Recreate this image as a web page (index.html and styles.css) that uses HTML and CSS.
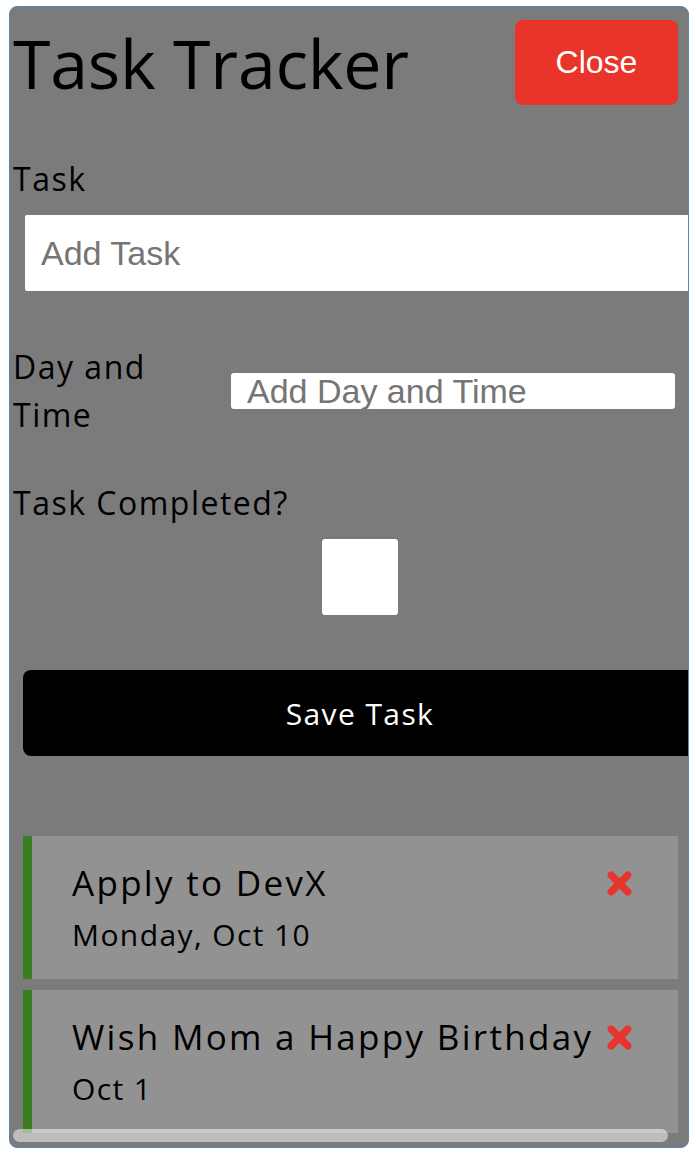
FILE: index.html
```html
<!DOCTYPE html>
<html lang="en">
<head>
<meta charset="utf-8">
<title>Task Tracker</title>
<link rel="stylesheet" href="styles.css">
</head>
<body>
<div class="app">
  <header class="header">
    <h1 class="title">Task Tracker</h1>
    <button class="btn-close" type="button">Close</button>
  </header>
  <form class="add-form">
    <div class="form-control">
      <label class="label">Task</label>
      <input class="input-task" type="text" placeholder="Add Task">
    </div>
    <div class="form-control form-row">
      <label class="label label-day">Day and Time</label>
      <input class="input-day" type="text" placeholder="Add Day and Time">
    </div>
    <div class="form-control form-check">
      <label class="label">Task Completed?</label>
      <input class="checkbox" type="checkbox">
    </div>
    <button class="btn-save" type="button">Save Task</button>
  </form>
  <div class="tasks">
    <div class="task">
      <h3 class="task-title">Apply to DevX
        <svg class="icon-x" viewBox="0 0 26 26" aria-hidden="true"><path d="M5 5 L21 21 M21 5 L5 21"/></svg>
      </h3>
      <p class="task-day">Monday, Oct 10</p>
    </div>
    <div class="task">
      <h3 class="task-title">Wish Mom a Happy Birthday
        <svg class="icon-x" viewBox="0 0 26 26" aria-hidden="true"><path d="M5 5 L21 21 M21 5 L5 21"/></svg>
      </h3>
      <p class="task-day">Oct 1</p>
    </div>
  </div>
  <div class="scroll-thumb"></div>
</div>
</body>
</html>
```
FILE: styles.css
```css
* { box-sizing: border-box; }

body {
  margin: 0;
  background: #ffffff;
  font-family: "Open Sans", "DejaVu Sans", sans-serif;
}

.app {
  position: relative;
  margin: 6px 0 0 9px;
  width: 680px;
  height: 1142px;
  border: 1px solid #5a86ba;
  border-radius: 8px;
  background: #7b7b7b;
  overflow: hidden;
  padding: 13px 10px 12px 3px;
}

.header {
  display: flex;
  justify-content: space-between;
  align-items: center;
  height: 85px;
}

.title {
  margin: 0;
  font-size: 68px;
  font-weight: 500;
  line-height: 85px;
  color: #000;
  letter-spacing: -0.2px;
}

.btn-close {
  width: 163px;
  height: 85px;
  border: none;
  border-radius: 8px;
  background: #e8342a;
  color: #fff;
  font-family: "Liberation Sans", Arial, sans-serif;
  font-size: 32px;
  padding: 0;
}

.add-form {
  width: 694px;
  margin-top: 50px;
}

.label {
  display: block;
  font-size: 32px;
  line-height: 48px;
  letter-spacing: 1.5px;
  color: #000;
}

.input-task {
  display: block;
  margin: 12px 0 0 12px;
  width: 682px;
  height: 76px;
  border: none;
  border-radius: 2px;
  padding: 0 16px;
  font-family: "Liberation Sans", Arial, sans-serif;
  font-size: 34px;
  background: #fff;
}

.form-row {
  display: flex;
  align-items: center;
  margin-top: 52px;
}

.label-day {
  width: 218px;
  padding-right: 60px;
  flex: none;
}

.input-day {
  width: 444px;
  height: 36px;
  border: none;
  border-radius: 3px;
  padding: 0 16px;
  font-family: "Liberation Sans", Arial, sans-serif;
  font-size: 34px;
  background: #fff;
}

.input-task::placeholder,
.input-day::placeholder {
  color: #757575;
}

.form-check {
  margin-top: 40px;
}

.checkbox {
  appearance: none;
  -webkit-appearance: none;
  display: block;
  width: 76px;
  height: 76px;
  margin: 12px auto 0;
  background: #fff;
  border-radius: 3px;
  border: none;
}

.btn-save {
  display: block;
  width: 674px;
  height: 86px;
  margin: 55px 0 0 10px;
  border: none;
  border-radius: 8px;
  background: #000;
  color: #fff;
  font-family: "Open Sans", "DejaVu Sans", sans-serif;
  font-size: 30px;
  font-weight: 500;
  letter-spacing: 1.4px;
}

.tasks {
  margin-top: 80px;
}

.task {
  margin: 0 0 11px 10px;
  background: #929292;
  border-left: 9px solid #3a7d23;
  padding: 23px 45px 22px 40px;
}

.task-title {
  display: flex;
  justify-content: space-between;
  align-items: center;
  margin: 0;
  font-size: 35px;
  font-weight: 400;
  line-height: 48px;
  letter-spacing: 2.3px;
  color: #000;
}

.icon-x {
  width: 27px;
  height: 27px;
  flex: none;
  stroke: #e8342a;
  stroke-width: 7;
  stroke-linecap: round;
  fill: none;
}

.task-day {
  margin: 6px 0 0;
  font-size: 30px;
  line-height: 44px;
  letter-spacing: 1.4px;
  color: #000;
}

.scroll-thumb {
  position: absolute;
  left: 3px;
  bottom: 5px;
  width: 655px;
  height: 13px;
  border-radius: 7px;
  background: rgba(255, 255, 255, 0.5);
}
```
